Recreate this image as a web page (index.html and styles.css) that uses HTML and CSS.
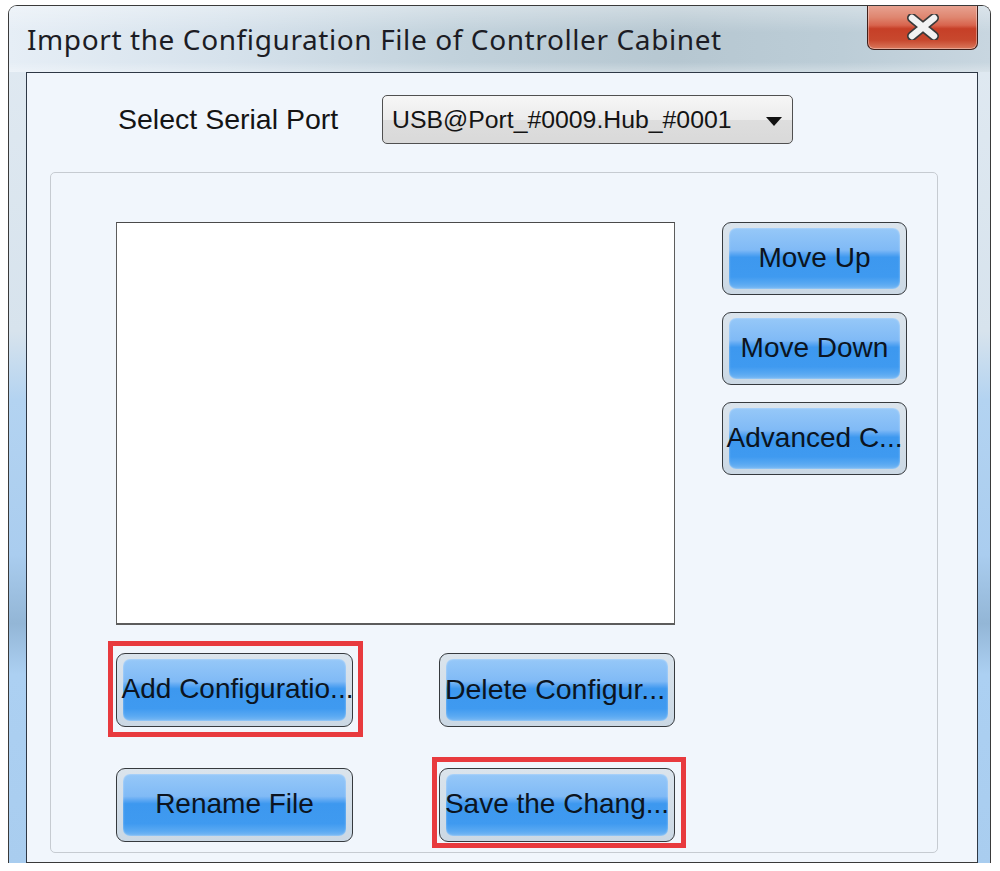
FILE: index.html
```html
<!DOCTYPE html>
<html lang="en">
<head>
<meta charset="utf-8">
<title>Import the Configuration File of Controller Cabinet</title>
<link rel="stylesheet" href="styles.css">
</head>
<body>
<div class="window">
  <div class="titlebar">
    <span class="title">Import the Configuration File of Controller Cabinet</span>
    <div class="close">
      <svg width="34" height="26" viewBox="0 0 34 26">
        <path d="M6 4 L28 22 M28 4 L6 22" stroke="#3a3a3a" stroke-width="10" stroke-linecap="round" fill="none"/>
        <path d="M6 4 L28 22 M28 4 L6 22" stroke="#f2f2f2" stroke-width="6.5" stroke-linecap="round" fill="none"/>
      </svg>
    </div>
  </div>
  <div class="client">
    <div class="port-row">
      <span class="port-label">Select Serial Port</span>
      <div class="combo">
        <span class="combo-text">USB@Port_#0009.Hub_#0001</span>
        <span class="combo-arrow"></span>
      </div>
    </div>
    <div class="group">
      <div class="listbox"></div>
      <div class="side">
        <div class="btn"><div class="face"></div><span class="label">Move Up</span></div>
        <div class="btn"><div class="face"></div><span class="label">Move Down</span></div>
        <div class="btn"><div class="face"></div><span class="label">Advanced C...</span></div>
      </div>
      <div class="btn b-add mark mark-add"><div class="face"></div><span class="label">Add Configuratio...</span></div>
      <div class="btn b-del"><div class="face"></div><span class="label">Delete Configur...</span></div>
      <div class="btn b-ren"><div class="face"></div><span class="label">Rename File</span></div>
      <div class="btn b-save mark mark-save"><div class="face"></div><span class="label">Save the Chang...</span></div>
    </div>
  </div>
</div>
</body>
</html>
```
FILE: styles.css
```css
* { box-sizing: border-box; }
html, body { margin: 0; padding: 0; background: #ffffff; }
body { width: 1000px; height: 871px; overflow: hidden; }

.window {
  margin: 5px 0 0 8px;
  width: 983px;
  height: 858px;
  border: 1px solid #3a3a3a;
  border-bottom: none;
  border-radius: 9px 9px 0 0;
  overflow: hidden;
  display: flex;
  flex-direction: column;
  background: linear-gradient(to bottom, #e1eaf2 0%, #d7e3ed 38%, #b3d3f1 46%, #aacdef 64%, #93b6d6 72%, #acd0f2 78%, #a9cdef 100%);
}

.titlebar {
  height: 66px;
  flex: none;
  display: flex;
  align-items: flex-start;
  justify-content: space-between;
  padding-left: 18px;
  background: linear-gradient(to right, #e6eef6 0%, #d6e2ec 22%, #c2d2dc 45%, #b6c7d1 68%, #bccdd7 85%, #c8d6e0 100%);
  position: relative;
}
.titlebar::after {
  content: "";
  position: absolute;
  left: 0; right: 0; top: 0; bottom: 0;
  background: linear-gradient(to bottom, rgba(255,255,255,0.35) 0%, rgba(255,255,255,0) 40%, rgba(255,255,255,0) 85%, rgba(255,255,255,0.3) 100%);
  pointer-events: none;
}
.title {
  margin-top: 15px;
  font-family: "Noto Sans", "Open Sans", sans-serif;
  font-size: 28px;
  letter-spacing: 0.6px;
  line-height: 36px;
  color: #1c1c24;
  white-space: nowrap;
  position: relative;
  z-index: 1;
}
.close {
  width: 111px;
  height: 45px;
  margin-right: 12px;
  margin-top: -1px;
  border: 1px solid #3f1f1a;
  border-top: none;
  border-radius: 0 0 7px 7px;
  background: linear-gradient(to bottom, #e8a493 0%, #df8670 28%, #d8644d 46%, #c63f27 54%, #c8482e 80%, #db785c 100%);
  display: flex;
  align-items: center;
  justify-content: center;
  box-shadow: inset 0 0 0 1px rgba(255,255,255,0.35);
  position: relative;
  z-index: 1;
}
.close svg { display: block; margin-top: 0; }

.client {
  flex: 1;
  margin: 0 12px 0 17px;
  border: 1px solid #2e3845;
  border-bottom: 1px solid #3a3a3a;
  background: #f1f6fc;
  display: flex;
  flex-direction: column;
}

.port-row {
  display: flex;
  align-items: center;
  padding: 22px 0 0 91px;
}
.port-label {
  width: 264px;
  font-family: "Liberation Sans", Arial, sans-serif;
  font-size: 28.5px;
  color: #141414;
  white-space: nowrap;
}
.combo {
  width: 411px;
  height: 49px;
  border: 1px solid #505050;
  border-radius: 5px;
  background: linear-gradient(to bottom, #f6f6f6 0%, #ececec 50%, #dedede 51%, #d9d9d9 100%);
  display: flex;
  align-items: center;
  justify-content: space-between;
  padding: 0 10px 0 9px;
}
.combo-text {
  font-family: "Liberation Sans", Arial, sans-serif;
  font-size: 24.8px;
  color: #141414;
  white-space: nowrap;
}
.combo-arrow {
  width: 0; height: 0;
  border-left: 8px solid transparent;
  border-right: 8px solid transparent;
  border-top: 9px solid #111111;
  margin-top: 3px;
}

.group {
  margin: 28px 0 0 23px;
  width: 888px;
  height: 681px;
  border: 1px solid #c6cbd1;
  border-radius: 5px;
  padding: 49px 0 0 65px;
  display: grid;
  grid-template-columns: 237px 86px 236px 47px 185px;
  grid-template-rows: 403px 28px 74px 41px 74px;
}
.listbox {
  grid-column: 1 / 4;
  grid-row: 1;
  background: #ffffff;
  border: 1px solid #5c5c5c;
  border-top-color: #4a4a4a;
  border-bottom: 2px solid #5c5c5c;
}
.side {
  grid-column: 5;
  grid-row: 1;
  display: flex;
  flex-direction: column;
  gap: 17px;
}
.side .btn { height: 73px; }

.btn {
  position: relative;
  border: 1px solid #363a3e;
  border-radius: 9px;
  background: linear-gradient(to bottom, #dbe4ec 0%, #cbd8e4 100%);
  padding: 5px 6px 5px 6px;
  display: flex;
}
.face {
  flex: 1;
  border-radius: 7px;
  background: linear-gradient(to bottom, #96c8f8 0%, #80baf6 36%, #5ea8f3 42%, #3d98ef 48%, #3f9af0 80%, #5aa9f2 92%, #7ab9f3 100%);
  box-shadow: inset 0 0 2px rgba(255,255,255,0.6);
}
.label {
  position: absolute;
  left: -20px; right: -20px; top: 0; bottom: 0;
  display: flex;
  align-items: center;
  justify-content: center;
  font-family: "Liberation Sans", Arial, sans-serif;
  font-size: 28px;
  color: #0c1420;
  white-space: nowrap;
  padding-bottom: 2px;
}
.b-add { grid-column: 1; grid-row: 3; }
.b-del { grid-column: 3; grid-row: 3; }
.b-ren { grid-column: 1; grid-row: 5; }
.b-save { grid-column: 3; grid-row: 5; }
.b-add .label { left: -16px; right: -22px; }
.b-del .label { left: -24px; right: -20px; font-size: 28.5px; }

.mark::after {
  content: "";
  position: absolute;
  border: 5px solid #e83a3e;
  pointer-events: none;
}
.mark-add::after { left: -9px; right: -11px; top: -13px; bottom: -11px; }
.mark-save::after { left: -8px; right: -12px; top: -12px; bottom: -7px; }
```
